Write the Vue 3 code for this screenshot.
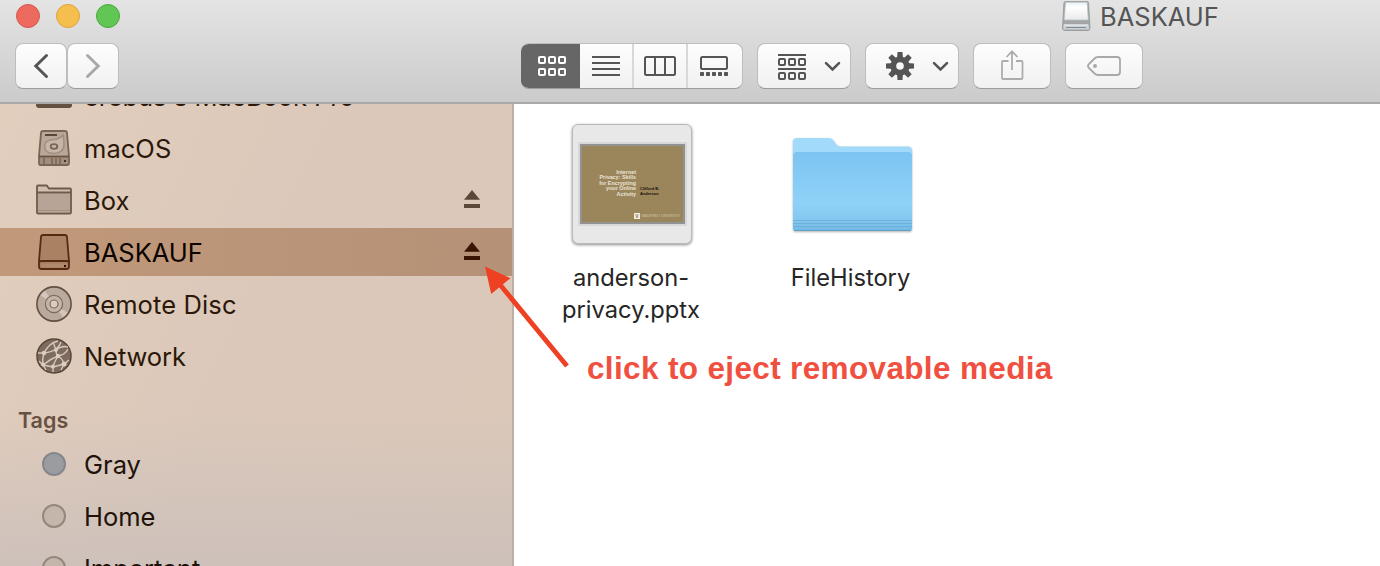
<script setup>
const places = [
  { name: 'macOS', icon: 'hdd', spacing: '0.05px' },
  { name: 'Box', icon: 'folder', eject: true, spacing: '0px' },
  { name: 'BASKAUF', icon: 'drive', eject: true, selected: true, spacing: '0px' },
  { name: 'Remote Disc', icon: 'disc', spacing: '0.12px' },
  { name: 'Network', icon: 'network', spacing: '-0.1px' },
]
const tags = [
  { name: 'Gray', filled: true },
  { name: 'Home' },
  { name: 'Important' },
]
const teeth = [0, 45, 90, 135, 180, 225, 270, 315]
const cells = [0, 10, 20]
</script>

<template>
  <div class="window">
    <header class="toolbar">
      <div class="titlebar">
        <div class="lights">
          <span class="light red"></span>
          <span class="light yellow"></span>
          <span class="light green"></span>
        </div>
        <div class="title">
          <svg width="30" height="32" viewBox="1061 0 30 32">
            <defs>
              <linearGradient id="plate" x1="0" y1="0" x2="0" y2="1">
                <stop offset="0" stop-color="#e9f0f3" />
                <stop offset=".3" stop-color="#ffffff" />
                <stop offset="1" stop-color="#e9e9e9" />
              </linearGradient>
            </defs>
            <path d="M1065.5 1.500h21.500q1.500 0 1.600 1.500l1.400 25q0 2.500-2 2.500h-23.500q-2 0-2-2.500l1.400-25q.1-1.500 1.600-1.500z" fill="#a3a5a6" stroke="#929596" stroke-width=".8" />
            <path d="M1065.500 2.200h21.600l1.200 17.800h-24z" fill="url(#plate)" stroke="#b5c3c9" stroke-width=".7" />
            <path d="M1063.500 24.500h25.200l.3 5h-25.800z" fill="#cbd1d4" />
            <path d="M1066 27.500h20" stroke="#7f8b91" stroke-width="1" />
            <path d="M1064 25h24" stroke="#edf2f4" stroke-width="1" />
          </svg>
          <span>BASKAUF</span>
        </div>
      </div>

      <div class="controls">
        <div class="btn nav">
          <svg viewBox="16 44 50 44"><path d="M46.500 55.500L35.800 66l10.700 10.500" fill="none" stroke="#555" stroke-width="3" stroke-linecap="round" /></svg>
        </div>
        <div class="btn nav fwd">
          <svg viewBox="68 44 50 44"><path d="M87.500 55.500L98.200 66 87.500 76.500" fill="none" stroke="#a9a9a9" stroke-width="3" stroke-linecap="round" /></svg>
        </div>

        <div class="btn segment">
          <div class="seg on">
            <svg viewBox="521 43 59 46">
              <g fill="none" stroke="#fff" stroke-width="2">
                <template v-for="x in cells" :key="x">
                  <rect :x="539 + x" y="57" width="6" height="6" rx="1" />
                  <rect :x="539 + x" y="69" width="6" height="6" rx="1" />
                </template>
              </g>
            </svg>
          </div>
          <div class="seg list">
            <svg viewBox="580 43 52 46"><path d="M592 57h28M592 63h28M592 69h28M592 75h28" stroke="#555" stroke-width="2" /></svg>
          </div>
          <div class="seg cols">
            <svg viewBox="634 43 52 46"><path d="M655 57v18M665 57v18" stroke="#555" stroke-width="2" /><rect x="645" y="57" width="30" height="18" rx="1.500" fill="none" stroke="#555" stroke-width="2" /></svg>
          </div>
          <div class="seg gallery">
            <svg viewBox="688 43 54 46">
              <rect x="701" y="57" width="26" height="12" rx="1.500" fill="none" stroke="#555" stroke-width="2" />
              <rect v-for="i in 5" :key="i" :x="694 + i * 6" y="72" width="4" height="4" rx=".8" fill="#555" />
            </svg>
          </div>
        </div>

        <div class="btn arrange">
          <svg viewBox="758 44 92 44">
            <path d="M778 55h28M778 69h28" stroke="#555" stroke-width="2" />
            <g fill="none" stroke="#555" stroke-width="2">
              <template v-for="x in cells" :key="x">
                <rect :x="779 + x" y="59" width="6" height="6" rx="1" />
                <rect :x="779 + x" y="73" width="6" height="6" rx="1" />
              </template>
            </g>
            <path d="M826 63.200l6.500 6.300 6.500-6.300" fill="none" stroke="#555" stroke-width="2.500" stroke-linecap="round" />
          </svg>
        </div>
        <div class="btn action">
          <svg viewBox="866 44 92 44">
            <g fill="#555" transform="translate(900 66)">
              <path v-for="a in teeth" :key="a" :transform="`rotate(${a})`" d="M-3-7L-2.500-14h5L3-7z" />
            </g>
            <circle cx="900" cy="66" r="6.700" fill="none" stroke="#555" stroke-width="5.800" />
            <path d="M934 63.200l6.500 6.300 6.500-6.300" fill="none" stroke="#555" stroke-width="2.500" stroke-linecap="round" />
          </svg>
        </div>
        <div class="btn share">
          <svg viewBox="974 44 76 44">
            <path d="M1008.500 61h-5.500q-1 0-1 1v16q0 1 1 1h18.500q1 0 1-1v-16q0-1-1-1h-5.500M1012 70V51.500M1006.500 57l5.500-5.700 5.500 5.700" fill="none" stroke="#acacac" stroke-width="1.800" />
          </svg>
        </div>
        <div class="btn tag">
          <svg viewBox="1066 44 76 44">
            <path d="M1098 57h19q3 0 3 3v12q0 3-3 3h-19q-2 0-3.500-1.500l-5.500-5.500q-2-2 0-4l5.500-5.500q1.500-1.500 3.500-1.500z" fill="none" stroke="#a9a9a9" stroke-width="1.800" />
            <circle cx="1095" cy="66" r="2" fill="#a9a9a9" />
          </svg>
        </div>
      </div>
    </header>

    <main class="body">
      <aside class="sidebar">
        <ul class="places">
          <li class="row cut">
            <span class="ico"><span class="laptop"></span></span>
            <span class="label">erebus's MacBook Pro</span>
          </li>
          <li v-for="p in places" :key="p.name" class="row" :class="{ selected: p.selected }">
            <span class="ico">
              <svg v-if="p.icon === 'hdd'" width="36" height="36" viewBox="0 0 36 36">
                <path d="M7 1h22q1.800 0 2 1.800L33 26v7.500q0 1.500-1.500 1.500h-27Q3 35 3 33.500V26L5 2.800Q5.200 1 7 1z" fill="#b9a79a" stroke="#7a6454" stroke-width="1.800" />
                <path d="M4 27h28v7H4z" fill="#a18c7e" />
                <path d="M3 26.500h30" stroke="#6a5342" stroke-width="1.800" />
                <path d="M9 5h12" stroke="#5b4535" stroke-width="2" />
                <path d="M27 5q1 4 1 10c0 5-4 8.500-10 8.500S8.500 20.500 8.500 16.500 12 9.500 18 9.500q5 0 9-4.500z" fill="#c6b5a8" stroke="#a18e80" stroke-width="1.600" />
                <ellipse cx="18" cy="16.500" rx="3.300" ry="2.300" fill="#c6b5a8" stroke="#7a6454" stroke-width="1.800" />
                <path d="M8 28v6M16 28v6M20 28v6M24 28v6" stroke="#78614f" stroke-width="1.400" />
                <rect x="28" y="30" width="2" height="2" fill="#4b3526" />
              </svg>
              <svg v-else-if="p.icon === 'folder'" width="36" height="36" viewBox="0 0 36 36">
                <g transform="translate(0 -.5)">
                  <path d="M1 31V5q0-1 1-1h8q1 0 1.500 1l1.500 2H34q1 0 1 1v23q0 1-1 1H2q-1 0-1-1z" fill="#d0beb1" />
                  <path d="M2 12h32v18H2z" fill="#b7a496" />
                  <path d="M1 11h34" stroke="#6f5a4a" stroke-width="1.800" />
                  <path d="M1 31V5q0-1 1-1h8q1 0 1.500 1l1.500 2H34q1 0 1 1v23q0 1-1 1H2q-1 0-1-1z" fill="none" stroke="#6f5a4a" stroke-width="1.800" />
                  <path d="M2 29.200h32" stroke="#a08b7c" stroke-width="1" />
                </g>
              </svg>
              <svg v-else-if="p.icon === 'drive'" width="36" height="36" viewBox="0 0 36 36">
                <path d="M7.200 1h21.600q2 0 2.200 2L33 27v5.500q0 2.500-2.500 2.500h-25Q3 35 3 32.500V27L5 3q.2-2 2.200-2z" fill="#a98263" stroke="#552a10" stroke-width="1.800" />
                <path d="M3.500 28q.5-1 2-1h25q1.500 0 2 1" fill="none" stroke="#552a10" stroke-width="1.800" />
                <path d="M6 30h24v3H6z" fill="#b08a6c" />
                <rect x="28" y="31" width="2" height="2" fill="#2f1404" />
              </svg>
              <svg v-else-if="p.icon === 'disc'" width="36" height="36" viewBox="0 0 36 36">
                <circle cx="18" cy="18" r="17" fill="#b9a99e" />
                <path d="M18 18L4 9 8.500 4zM18 18l14 9-4.500 5z" fill="#d4c6bb" />
                <circle cx="18" cy="18" r="17.100" fill="none" stroke="#65503f" stroke-width="1.600" />
                <circle cx="18" cy="18" r="8.600" fill="#c4b5aa" stroke="#7e6a5b" stroke-width="1.200" />
                <circle cx="18" cy="18" r="4" fill="#dccbbe" stroke="#7e6a5b" stroke-width="1.200" />
              </svg>
              <svg v-else width="36" height="36" viewBox="0 0 36 36">
                <circle cx="18" cy="18" r="17" fill="#7d6b5f" stroke="#5b4636" stroke-width="1.500" />
                <g fill="none" stroke="#d8c8bb" stroke-width="1.400">
                  <path d="M8 15Q13 5 22 3M8 15q8-1 12-4 4-3 5-7M20 12q6-5 12-3M20 12q0 5 2 6 7-1 10-7M22 18q-8 3-15 9M22 18q5 3 6 8M8 15q-2 6-1 12M2 15l6 0M3 23l4 4 10 2 11-3 5-4M17 28v6M17 28q2-5 5-10M7 27l3 5M20 12l-3-8M28 26l-3 6" />
                </g>
                <g fill="#dccdc1"><circle cx="8" cy="15" r="2.200" /><circle cx="20" cy="12" r="1.900" /><circle cx="22" cy="18" r="2.200" /><circle cx="7" cy="26.500" r="2" /><circle cx="17" cy="28.500" r="2" /><circle cx="28" cy="26" r="2.500" /></g>
              </svg>
            </span>
            <span class="label" :style="{ letterSpacing: p.spacing }">{{ p.name }}</span>
            <svg v-if="p.eject" class="eject" width="16" height="18" viewBox="0 0 16 18">
              <path d="M8 0l8 9.700H0zM0 14h16v4H0z" fill="currentColor" />
            </svg>
          </li>
        </ul>
        <h2 class="heading">Tags</h2>
        <ul class="tags">
          <li v-for="t in tags" :key="t.name" class="row">
            <span class="ico"><span class="dot" :class="{ filled: t.filled }"></span></span>
            <span class="label">{{ t.name }}</span>
          </li>
        </ul>
      </aside>

      <section class="files">
        <figure class="file">
          <div class="thumb">
            <div class="slide">
              <p class="slide-title">Internet<br />Privacy: Skills<br />for Encrypting<br />your Online<br />Activity</p>
              <p class="slide-author">Clifford B.<br />Anderson</p>
              <p class="slide-brand"><b>V</b><span>VANDERBILT UNIVERSITY</span></p>
            </div>
          </div>
          <figcaption class="pptx">anderson-<br />privacy.pptx</figcaption>
        </figure>
        <figure class="file">
          <div class="thumb-folder">
            <svg width="120" height="96" viewBox="792 137 120 96">
              <defs>
                <linearGradient id="front" x1="0" y1="0" x2="0" y2="1">
                  <stop offset="0" stop-color="#7cc4f2" />
                  <stop offset=".65" stop-color="#8fd2f8" />
                  <stop offset=".86" stop-color="#84c8ef" />
                  <stop offset="1" stop-color="#72b8e2" />
                </linearGradient>
              </defs>
              <path d="M793 228v-86q0-4 4-4h32q3 0 5 3l2 3q2 2.500 5 2.500h67q4 0 4 4v77q0 3-3 3h-113q-3 0-3-3z" fill="#a2dafb" />
              <path d="M793 156q0-4 4-4h111q4 0 4 4v72q0 3-3 3h-113q-3 0-3-3z" fill="url(#front)" />
              <path d="M793 220.500h119M793 223.500h119M793 226.500h119" stroke="#68add8" stroke-width="1" opacity=".75" />
              <path d="M794 230.500h117" stroke="#5f9fc5" stroke-width="1" />
            </svg>
          </div>
          <figcaption>FileHistory</figcaption>
        </figure>
      </section>
    </main>

    <svg class="arrow" width="90" height="106" viewBox="482 264 90 106">
      <path d="M567 366L497 281" stroke="#ee4023" stroke-width="4.800" />
      <path d="M485 266.500l25.500 11.700-19.300 15.800z" fill="#ee4023" />
    </svg>
    <p class="note">click to eject removable media</p>
  </div>
</template>

<style>
body { background: #fff; overflow: hidden; }
</style>

<style scoped>
* { box-sizing: border-box; }
p, ul, h2, figure { margin: 0; padding: 0; list-style: none; }
svg { display: block; }
.window {
  position: relative;
  width: 1380px;
  height: 566px;
  overflow: hidden;
  display: flex;
  flex-direction: column;
  font-family: Inter, "Liberation Sans", sans-serif;
}
.toolbar {
  height: 104px;
  flex: none;
  background: linear-gradient(#e4e4e4, #cbcbcb);
  border-bottom: 2px solid #a9a9a9;
}
.titlebar { height: 43px; display: flex; }
.lights { display: flex; gap: 16px; padding: 4px 0 0 16px; width: 1061px; }
.light { width: 24px; height: 24px; border-radius: 50%; border: 1px solid; }
.red { background: #ed6a5e; border-color: #d6554b; }
.yellow { background: #f5bf4f; border-color: #dca236; }
.green { background: #61c654; border-color: #4ba63d; }
.title { display: flex; height: 34px; gap: 9px; color: #555; font-size: 25.500px; line-height: 34px; white-space: nowrap; }
.controls { display: flex; padding-left: 15px; }
.btn {
  height: 46px;
  flex: none;
  border: 1px solid #bdbdbd;
  border-bottom-color: #9c9c9c;
  border-radius: 8px;
  background: linear-gradient(#fdfdfd, #f1f1f1);
  overflow: hidden;
}
.btn > svg { width: 100%; height: 44px; }
.nav { width: 52px; }
.segment { display: flex; width: 222px; margin-left: 402px; border-left: 0; }
.seg { height: 44px; flex: none; border-right: 2px solid #d8d8d8; }
.seg svg { width: 100%; height: 46px; margin-top: -1px; }
.on { width: 59px; background: #666; border: 0; }
.list { width: 54px; }
.cols { width: 54px; }
.gallery { width: 54px; border: 0; }
.arrange, .action { width: 94px; margin-left: 14px; }
.share, .tag { width: 78px; margin-left: 14px; }
.body { display: flex; height: 462px; }
.sidebar {
  width: 514px;
  flex: none;
  height: 462px;
  overflow: hidden;
  border-right: 2px solid #bfaea3;
  background:
    linear-gradient(transparent 310px, rgba(202, 191, 187, .85) 475px),
    linear-gradient(115deg, #e2cebd 0%, #dbc8ba 50%, #dbc8b9 100%);
}
.places { display: flex; flex-direction: column; gap: 4px; margin-top: -32px; }
.row { display: flex; align-items: center; height: 48px; padding: 0 32px 0 36px; color: #2b1808; }
.ico { width: 36px; height: 36px; display: flex; align-items: center; justify-content: center; }
.label { margin-left: 12px; font-size: 25.500px; line-height: 48px; white-space: nowrap; padding-top: 2px; flex: 1; }
.cut .label { letter-spacing: -.1px; }
.laptop { width: 36px; height: 24px; border-radius: 3px; background: #665040; }
.selected { background: linear-gradient(90deg, #c1997a, #b59177); color: #0c0300; }
.eject { color: #5c4838; margin-top: -2px; }
.selected .eject { color: #3a1402; }
.heading { height: 61px; padding: 23px 0 0 18px; font-size: 21.500px; line-height: 34px; font-weight: 600; color: #685142; }
.tags { display: flex; flex-direction: column; gap: 4px; }
.tags .row { height: 48px; color: #201209; flex: none; }
.tags .label { padding-top: 0; }
.dot { width: 24px; height: 24px; border-radius: 50%; border: 2px solid #95867d; background: #c5b6ac; margin-top: -2px; }
.filled { background: #9b9ca0; border-color: #85878c; }
.files { display: flex; flex: 1; background: #fff; }
.file { width: 220px; display: flex; flex-direction: column; align-items: center; margin-left: 8px; }
.file + .file { margin-left: 0; }
.thumb {
  width: 120px;
  height: 120px;
  margin-top: 20px;
  padding: 19px 7px;
  border: 1px solid #b9b9b9;
  border-radius: 6px;
  background: #e8e8e8;
  box-shadow: 0 1px 3px rgba(0, 0, 0, .45);
}
.slide {
  position: relative;
  width: 105px;
  height: 80px;
  border: 2px solid #929292;
  background: #9b865c;
  box-shadow: 0 0 0 2px #d8d8d8;
  font-family: "Liberation Sans", Arial, sans-serif;
}
.slide-title { position: absolute; right: 47px; top: 24px; font-size: 5.400px; line-height: 5.400px; font-weight: 700; text-align: right; color: #e9e3d6; white-space: nowrap; }
.slide-author { position: absolute; left: 58px; top: 41px; font-size: 4px; line-height: 4.500px; font-weight: 700; color: #15110a; white-space: nowrap; }
.slide-brand { position: absolute; left: 52px; top: 67px; display: flex; align-items: center; gap: 1px; font-size: 3.200px; line-height: 6px; color: #d0c5a8; white-space: nowrap; }
.slide-brand b { width: 6px; height: 6px; background: #f0ece2; color: #8a7548; text-align: center; font-size: 5px; }
.thumb-folder { height: 140px; padding-top: 33px; }
.thumb-folder svg { filter: drop-shadow(0 1px 1px rgba(0, 0, 0, .3)); }
figcaption { margin: 18px 3px 0 0; font-size: 23.700px; line-height: 32px; text-align: center; color: #262626; white-space: nowrap; }
.pptx { margin-right: 2px; }
.arrow { position: absolute; left: 482px; top: 264px; }
.note {
  position: absolute;
  left: 587px;
  top: 350px;
  font: 700 31.500px/36px "Liberation Sans", Arial, sans-serif;
  letter-spacing: .35px;
  color: #f05040;
  white-space: nowrap;
}
</style>
